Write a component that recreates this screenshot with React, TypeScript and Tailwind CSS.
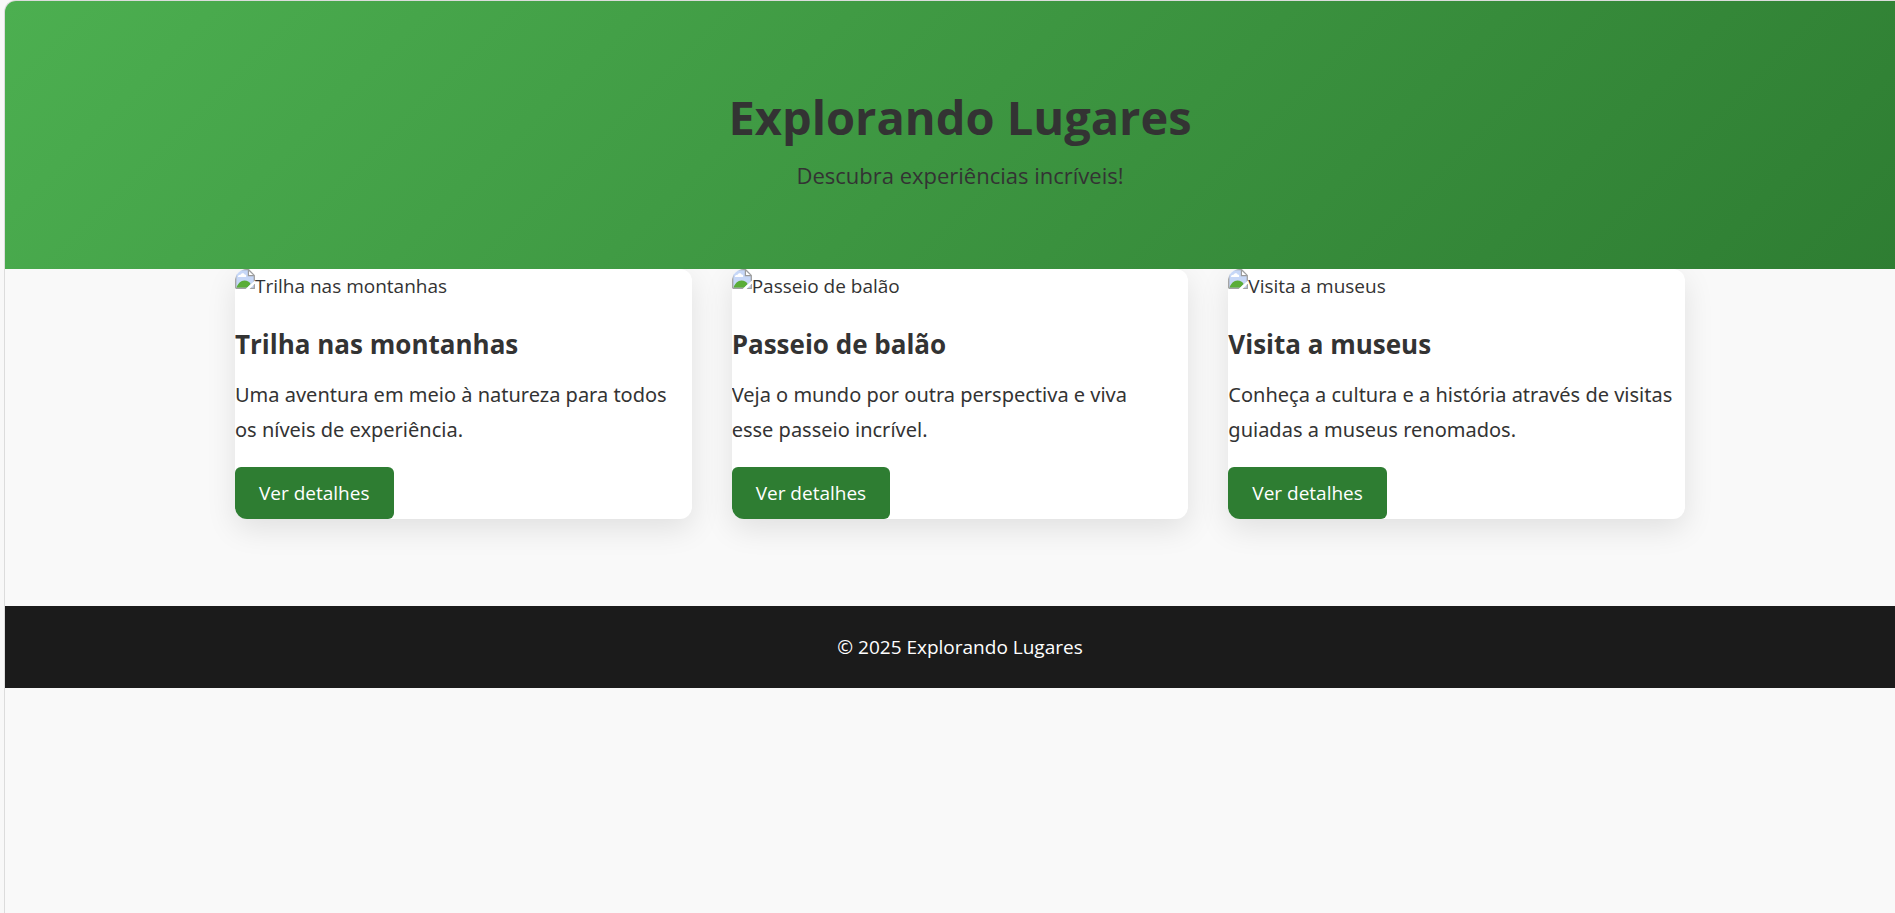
const places = [
  {
    title: "Trilha nas montanhas",
    lines: ["Uma aventura em meio à natureza para todos", "os níveis de experiência."],
  },
  {
    title: "Passeio de balão",
    lines: ["Veja o mundo por outra perspectiva e viva", "esse passeio incrível."],
  },
  {
    title: "Visita a museus",
    lines: ["Conheça a cultura e a história através de visitas", "guiadas a museus renomados."],
  },
];

function MissingImageIcon() {
  return (
    <svg viewBox="0 0 20 20" className="h-5 w-5 shrink-0" aria-hidden="true">
      <path d="M1 .8H14L19.2 6V19.2H1Z" fill="#c6d7f7" />
      <path d="M3 8C2.8 6.2 4.6 5.6 5.6 5.8C6.2 3.6 9.2 3.8 9.6 5.6C11 5.4 11.6 7 11 8Z" fill="#fff" />
      <path d="M1.4 18.8C2.6 14.8 6 11.6 9.4 11.6C12.4 11.6 14.6 13 15.6 15L12 18.8Z" fill="#5aad38" />
      <path d="M13.4 1V6.6H19" fill="#fff" stroke="#9a9a9a" strokeWidth="1.2" />
      <path d="M.7 19.3V.7H13.6L19.3 6.4V19.3H.7" fill="none" stroke="#a0a0a0" strokeWidth="1.3" />
      <path d="M20 11.4V14.6L14.6 20H10.6Z" fill="#fff" />
    </svg>
  );
}

export default function App() {
  return (
    <div className="min-h-screen overflow-hidden bg-[#f8f8f8] pl-1 font-['Open_Sans','Noto_Sans',sans-serif] text-[19px] text-[#333]">
      <div className="-mr-5 min-h-screen rounded-tl-xl border-t border-l border-[#dcdcdc] bg-[#f9f9f9]">
        <header className="relative z-10 rounded-tl-[11px] bg-linear-135 from-[#4caf50] to-[#2e7d32] px-5 pt-[78px] pb-[74px] text-center">
          <h1 className="text-[47px] leading-[76px] font-bold">Explorando Lugares</h1>
          <p className="text-[22px] leading-10">Descubra experiências incríveis!</p>
        </header>
        <main className="mx-auto grid max-w-[1450px] grid-cols-3 gap-10 pb-[87px]">
          {places.map((place) => (
            <article
              key={place.title}
              className="overflow-hidden rounded-xl bg-white shadow-[0_10px_30px_rgba(0,0,0,0.1)]"
            >
              <div role="img" aria-label={place.title} className="flex h-[50px] items-start">
                <MissingImageIcon />
                <span className="leading-[34px]">{place.title}</span>
              </div>
              <h2 className="text-[26px] leading-[50px] font-bold">{place.title}</h2>
              <p className="mt-2 mb-5 font-['Noto_Sans','Open_Sans',sans-serif] text-[20px] leading-[35px]">
                {place.lines[0]}
                <br />
                {place.lines[1]}
              </p>
              <button type="button" className="block h-[52px] rounded-md bg-[#2e7d32] px-6 text-white">
                Ver detalhes
              </button>
            </article>
          ))}
        </main>
        <footer className="bg-[#1b1b1b] py-6 text-center leading-[34px] text-white">
          © 2025 Explorando Lugares
        </footer>
      </div>
    </div>
  );
}
